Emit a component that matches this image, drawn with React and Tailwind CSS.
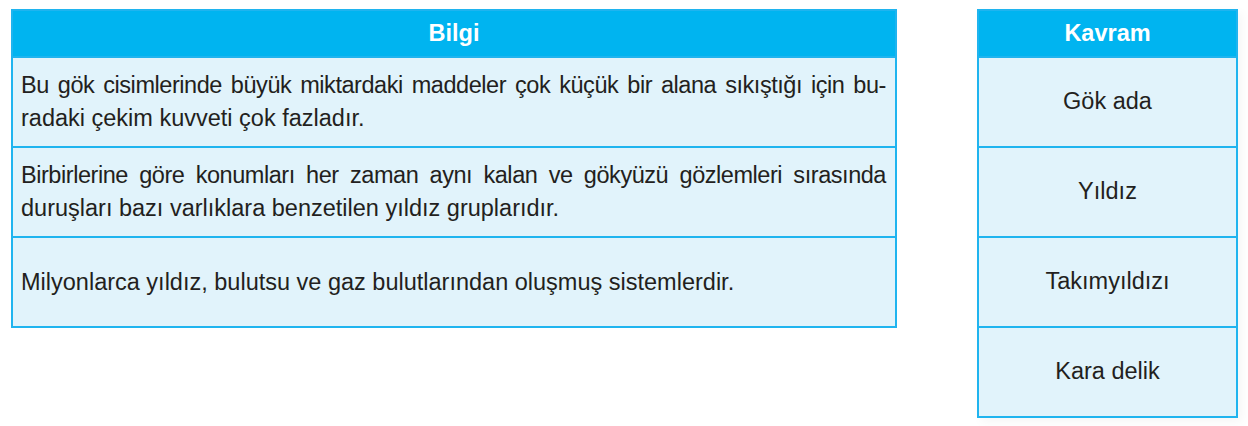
const bilgiler = [
  ["Bu gök cisimlerinde büyük miktardaki maddeler çok küçük bir alana sıkıştığı için bu-", "radaki çekim kuvveti çok fazladır."],
  ["Birbirlerine göre konumları her zaman aynı kalan ve gökyüzü gözlemleri sırasında", "duruşları bazı varlıklara benzetilen yıldız gruplarıdır."],
  ["Milyonlarca yıldız, bulutsu ve gaz bulutlarından oluşmuş sistemlerdir."],
];

const kavramlar = ["Gök ada", "Yıldız", "Takımyıldızı", "Kara delik"];

const App = () => {
  return (
    <div
      className="w-[1248px] h-[426px] bg-white flex items-start gap-[80px] pt-[9px] pl-[11px]"
      style={{ fontFamily: '"Liberation Sans", Arial, sans-serif' }}
    >
      {/* Bilgi tablosu */}
      <div className="w-[886px] border-2 border-[#1fb4ef] bg-[#e1f3fb]">
        <div className="h-[45px] bg-[#00b4f0] flex items-center justify-center text-white font-bold text-[23.5px]">
          Bilgi
        </div>
        {bilgiler.map((lines, i) => (
          <div
            key={i}
            className="h-[90px] border-t-2 border-[#1fb4ef] flex flex-col justify-center pl-[8px] pr-[9px] text-[23.5px] leading-[33px] text-[#231f20]"
          >
            {lines.map((line, j) => (
              <p
                key={j}
                className={
                  j < lines.length - 1
                    ? "whitespace-nowrap tracking-[-0.45px] text-justify [text-align-last:justify]"
                    : "text-left"
                }
              >
                {line}
              </p>
            ))}
          </div>
        ))}
      </div>

      {/* Kavram tablosu */}
      <div className="w-[261px] border-2 border-[#1fb4ef] bg-[#e1f3fb] shadow-[4px_4px_10px_rgba(0,0,0,0.04)]">
        <div className="h-[45px] bg-[#00b4f0] flex items-center justify-center text-white font-bold text-[23.5px]">
          Kavram
        </div>
        {kavramlar.map((k) => (
          <div
            key={k}
            className="h-[90px] border-t-2 border-[#1fb4ef] flex items-center justify-center text-[23.5px] text-[#231f20]"
          >
            {k}
          </div>
        ))}
      </div>
    </div>
  );
};

export default App;
